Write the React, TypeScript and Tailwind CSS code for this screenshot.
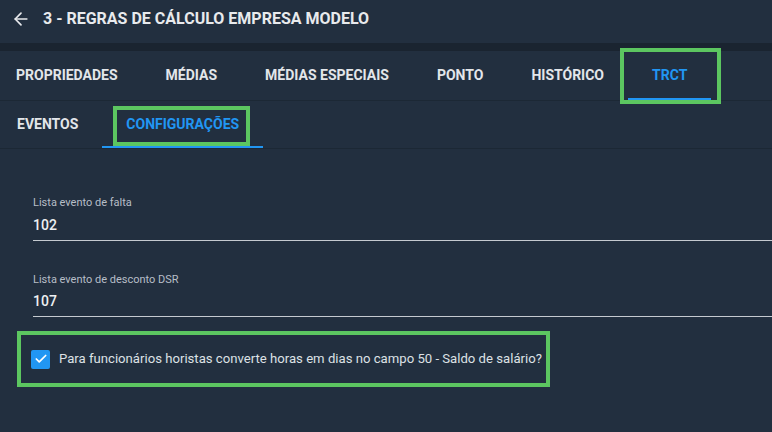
import { ArrowLeft, Check } from "lucide-react"

const mainTabs = ["PROPRIEDADES", "MÉDIAS", "MÉDIAS ESPECIAIS", "PONTO", "HISTÓRICO", "TRCT"]
const subTabs = ["EVENTOS", "CONFIGURAÇÕES"]

function Tab({ label, active, boxed }: { label: string; active?: boolean; boxed?: string }) {
  return (
    <div className={`relative flex h-full items-center px-6 ${active ? "text-[#2196f3]" : "text-[#e3e6ea]"}`}>
      {boxed && <div className={`pointer-events-none absolute border-4 border-[#5cc660] ${boxed}`} />}
      <span>{label}</span>
      {active && <div className="absolute bottom-0 left-0 right-0 h-[2px] bg-[#2196f3]" />}
    </div>
  )
}

function Field({ label, value }: { label: string; value: string }) {
  return (
    <div className="flex flex-col">
      <span className="text-[11px] text-[#b7bec7]">{label}</span>
      <span className="mt-[3px] pb-[4px] text-[14px] font-medium text-[#eef0f2] border-b border-[#c5cad0]">{value}</span>
    </div>
  )
}

export default function App() {
  return (
    <div className="h-[432px] w-[772px] overflow-hidden bg-[#222f3f] font-['Roboto',sans-serif]">
      <header className="flex h-[43px] items-center gap-[12px] pb-[6px] pl-[11px]">
        <ArrowLeft className="h-[20px] w-[20px] text-[#e8eaed]" strokeWidth={2} />
        <h1 className="text-[16px] font-bold text-[#e8eaed]">3 - REGRAS DE CÁLCULO EMPRESA MODELO</h1>
      </header>
      <div className="h-[8px] bg-[#1a2430]" />
      <nav className="-ml-[8px] flex h-[50px] text-[14px] font-bold border-b border-[#1c2835]">
        {mainTabs.map((t) => (
          <Tab
            key={t}
            label={t}
            active={t === "TRCT"}
            boxed={t === "TRCT" ? "-top-[3px] -bottom-[4px] -left-[8px] -right-[10px]" : undefined}
          />
        ))}
      </nav>
      <nav className="-ml-[7px] flex h-[48px] text-[14px] font-bold border-b border-[#1c2835]">
        {subTabs.map((t) => (
          <Tab
            key={t}
            label={t}
            active={t === "CONFIGURAÇÕES"}
            boxed={t === "CONFIGURAÇÕES" ? "top-[5px] bottom-[2px] left-[11px] right-[13px]" : undefined}
          />
        ))}
      </nav>
      <div className="flex flex-col gap-[31px] pl-[33px] pt-[46px]">
        <Field label="Lista evento de falta" value="102" />
        <Field label="Lista evento de desconto DSR" value="107" />
      </div>
      <div className="ml-[17px] mt-[14px] flex h-[56px] w-[533px] items-center gap-[9px] border-4 border-[#5cc660] pl-[10px]">
        <div className="flex h-[19px] w-[19px] items-center justify-center rounded-[2px] bg-[#2196f3]">
          <Check className="h-[14px] w-[14px] text-white" strokeWidth={3} />
        </div>
        <span className="text-[13.15px] text-[#dde1e5]">Para funcionários horistas converte horas em dias no campo 50 - Saldo de salário?</span>
      </div>
    </div>
  )
}
